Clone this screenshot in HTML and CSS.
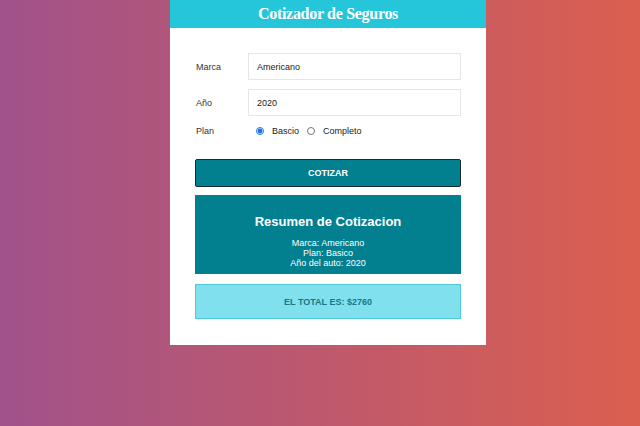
FILE: index.html
```html
<!DOCTYPE html>
<html lang="es">
<head>
<meta charset="utf-8">
<title>Cotizador de Seguros</title>
<link rel="stylesheet" href="styles.css">
</head>
<body>
<div class="page">
  <div class="card">
    <header class="card-header"><h1 class="title">Cotizador de Seguros</h1></header>
    <form class="form">
      <div class="field">
        <label class="label">Marca</label>
        <div class="input">Americano</div>
      </div>
      <div class="field">
        <label class="label">Año</label>
        <div class="input">2020</div>
      </div>
      <div class="field plan">
        <label class="label">Plan</label>
        <div class="radios">
          <input type="radio" class="radio" name="plan" checked><span class="opt">Bascio</span>
          <input type="radio" class="radio" name="plan"><span class="opt">Completo</span>
        </div>
      </div>
      <button type="button" class="btn">COTIZAR</button>
    </form>
    <div class="summary">
      <h2 class="summary-title">Resumen de Cotizacion</h2>
      <p class="summary-line">Marca: Americano</p>
      <p class="summary-line">Plan: Basico</p>
      <p class="summary-line">Año del auto: 2020</p>
    </div>
    <div class="total"><p class="total-text">EL TOTAL ES: $2760</p></div>
  </div>
</div>
</body>
</html>
```
FILE: styles.css
```css
* { box-sizing: border-box; }
html, body { margin: 0; padding: 0; height: 100%; }
body {
  background: linear-gradient(to right, #a1528b, #db5f4f);
  font-family: "Liberation Sans", Arial, sans-serif;
  color: #222;
}
.page {
  display: flex;
  justify-content: center;
  min-height: 426px;
  padding-left: 16px;
}
.card {
  width: 316px;
  background: #fff;
  align-self: flex-start;
  padding-bottom: 26px;
}
.card-header {
  background: #26c6da;
  height: 28px;
  display: flex;
  align-items: center;
  justify-content: center;
}
.title {
  margin: 0;
  color: #fff;
  font-family: "Liberation Serif", "DejaVu Serif", serif;
  font-size: 16px;
  font-weight: bold;
  letter-spacing: -0.3px;
}
.form {
  padding: 25px 25px 0 25px;
  display: flex;
  flex-direction: column;
}
.field {
  display: flex;
  align-items: center;
  margin-bottom: 9px;
}
.label {
  width: 53px;
  padding-left: 1px;
  font-size: 9px;
  color: #333;
}
.input {
  flex: 1;
  height: 27px;
  border: 1px solid #e6e6e6;
  padding: 0 8px;
  display: flex;
  align-items: center;
  font-size: 9px;
  color: #222;
}
.plan { margin-top: -3px; margin-bottom: 0; height: 18px; }
.radios {
  display: flex;
  align-items: center;
  padding-left: 8px;
  font-size: 9px;
}
.radio {
  margin: 0;
  width: 8px;
  height: 8px;
  accent-color: #1a73e8;
}
.opt { margin: 0 8px 0 8px; }
.btn {
  margin-top: 19px;
  height: 28px;
  background: #028090;
  border: 1px solid #1b2a2c;
  border-radius: 2px;
  color: #fff;
  font-family: "Liberation Sans", Arial, sans-serif;
  font-size: 9px;
  font-weight: bold;
}
.summary {
  margin: 8px 25px 0 25px;
  height: 79px;
  background: #028090;
  color: #fff;
  text-align: center;
  padding-top: 19px;
}
.summary-title {
  margin: 0 0 9px 0;
  font-size: 13px;
  font-weight: bold;
}
.summary-line {
  margin: 0;
  font-size: 9px;
  line-height: 10px;
}
.total {
  margin: 10px 25px 0 25px;
  height: 35px;
  background: #80e0ed;
  border: 1px solid #4fc9d8;
  display: flex;
  align-items: center;
  justify-content: center;
}
.total-text {
  margin: 0;
  color: #16788a;
  font-size: 9px;
  font-weight: bold;
}
```
